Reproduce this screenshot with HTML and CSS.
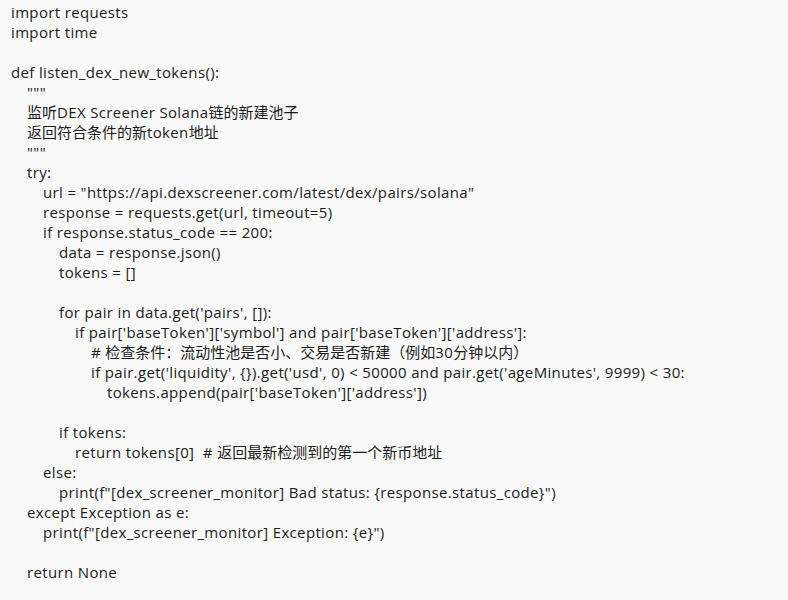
FILE: index.html
```html
<!DOCTYPE html>
<html lang="zh-CN">
<head>
<meta charset="utf-8">
<title>dex screener monitor</title>
<link rel="stylesheet" href="styles.css">
</head>
<body>
<div class="code">
<div class="ln">import requests</div>
<div class="ln">import time</div>
<div class="ln"></div>
<div class="ln">def listen_dex_new_tokens():</div>
<div class="ln i1">"""</div>
<div class="ln i1"><span class="cjk">监听</span>DEX Screener Solana<span class="cjk">链的新建池子</span></div>
<div class="ln i1"><span class="cjk">返回符合条件的新</span>token<span class="cjk">地址</span></div>
<div class="ln i1">"""</div>
<div class="ln i1">try:</div>
<div class="ln i2">url = "https://api.dexscreener.com/latest/dex/pairs/solana"</div>
<div class="ln i2">response = requests.get(url, timeout=5)</div>
<div class="ln i2">if response.status_code == 200:</div>
<div class="ln i3">data = response.json()</div>
<div class="ln i3">tokens = []</div>
<div class="ln"></div>
<div class="ln i3">for pair in data.get('pairs', []):</div>
<div class="ln i4">if pair['baseToken']['symbol'] and pair['baseToken']['address']:</div>
<div class="ln i5"># <span class="cjk">检查条件：流动性池是否小、交易是否新建（例如</span>30<span class="cjk">分钟以内）</span></div>
<div class="ln i5">if pair.get('liquidity', {}).get('usd', 0) &lt; 50000 and pair.get('ageMinutes', 9999) &lt; 30:</div>
<div class="ln i6">tokens.append(pair['baseToken']['address'])</div>
<div class="ln"></div>
<div class="ln i3">if tokens:</div>
<div class="ln i4">return tokens[0]&nbsp; # <span class="cjk">返回最新检测到的第一个新币地址</span></div>
<div class="ln i2">else:</div>
<div class="ln i3">print(f"[dex_screener_monitor] Bad status: {response.status_code}")</div>
<div class="ln i1">except Exception as e:</div>
<div class="ln i2">print(f"[dex_screener_monitor] Exception: {e}")</div>
<div class="ln"></div>
<div class="ln i1">return None</div>
</div>
</body>
</html>
```
FILE: styles.css
```css
html, body {
  margin: 0;
  padding: 0;
  background: #f9f9f9;
}
.code {
  padding: 2px 11px 0;
  font-family: "Open Sans", "Noto Sans CJK SC", sans-serif;
  font-size: 15px;
  line-height: 20px;
  letter-spacing: 0.35px;
  color: #1b1b1b;
}
.ln {
  height: 20px;
  white-space: pre;
}
.cjk {
  letter-spacing: 0;
}
.i1 { padding-left: 16px; }
.i2 { padding-left: 32px; }
.i3 { padding-left: 48px; }
.i4 { padding-left: 64px; }
.i5 { padding-left: 80px; }
.i6 { padding-left: 96px; }
```
